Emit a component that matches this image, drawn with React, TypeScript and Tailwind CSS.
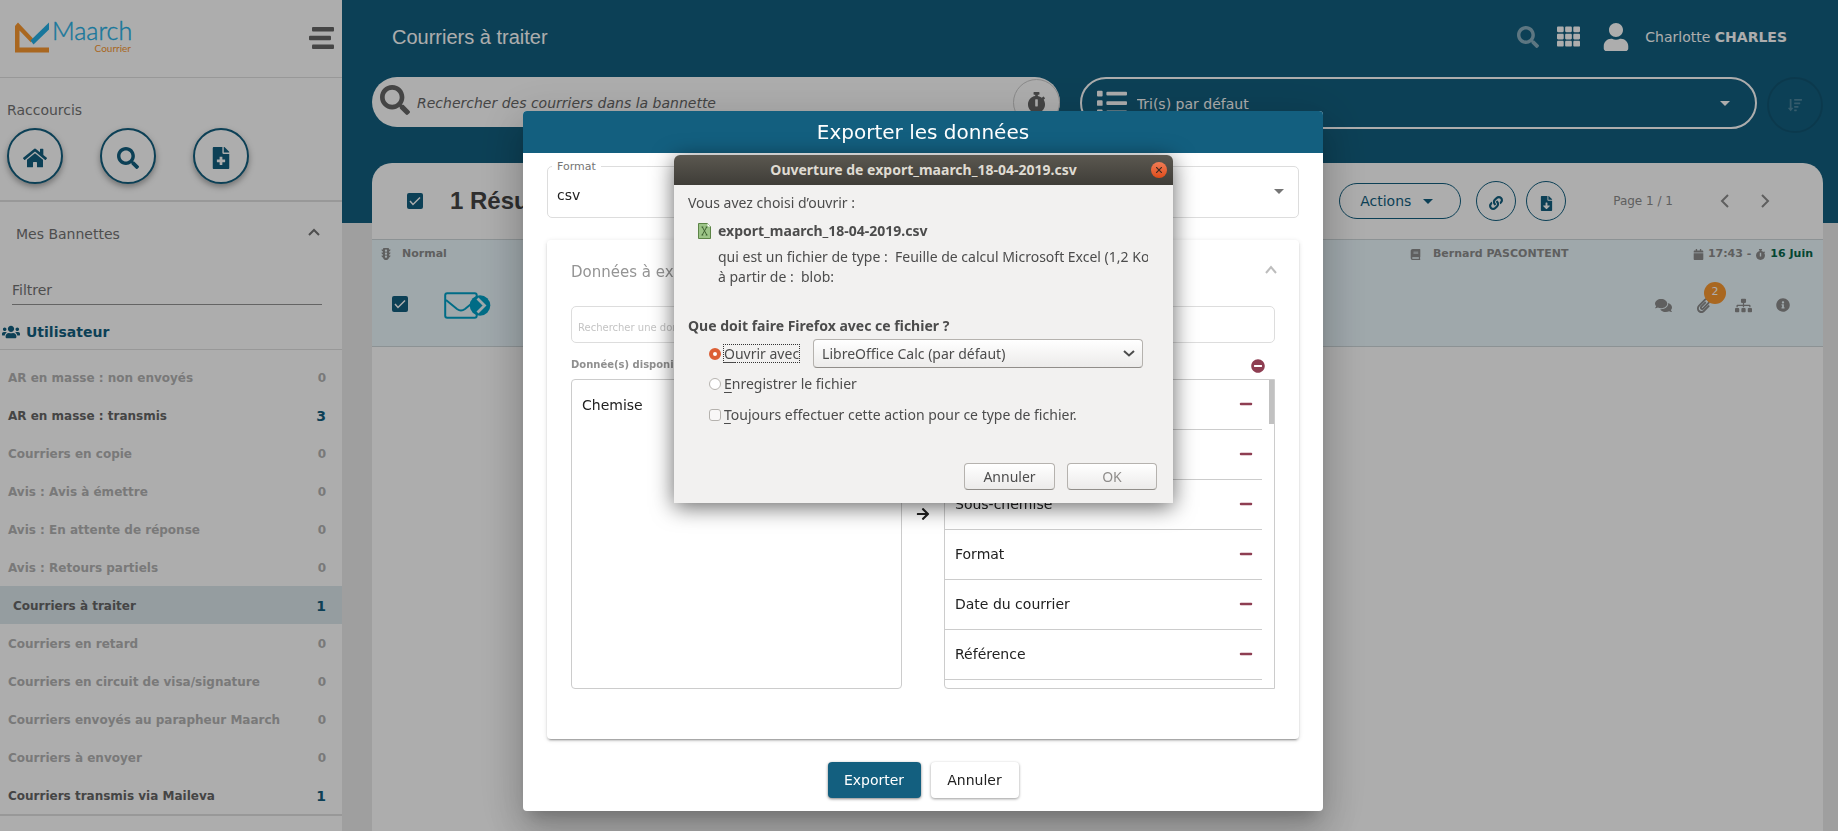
import React from 'react';
import {
  FaArrowRight,
  FaBook,
  FaCalendar,
  FaComments,
  FaFileDownload,
  FaFileMedical,
  FaHome,
  FaInfoCircle,
  FaLink,
  FaList,
  FaMinus,
  FaMinusCircle,
  FaPaperclip,
  FaSearch,
  FaSitemap,
  FaSortAmountDown,
  FaStopwatch,
  FaTh,
  FaTrafficLight,
  FaUser,
  FaUsers,
} from 'react-icons/fa';

const baskets = [
  { label: 'AR en masse : non envoyés', count: 0 },
  { label: 'AR en masse : transmis', count: 3 },
  { label: 'Courriers en copie', count: 0 },
  { label: 'Avis : Avis à émettre', count: 0 },
  { label: 'Avis : En attente de réponse', count: 0 },
  { label: 'Avis : Retours partiels', count: 0 },
  { label: 'Courriers à traiter', count: 1, selected: true },
  { label: 'Courriers en retard', count: 0 },
  { label: 'Courriers en circuit de visa/signature', count: 0 },
  { label: 'Courriers envoyés au parapheur Maarch', count: 0 },
  { label: 'Courriers à envoyer', count: 0 },
  { label: 'Courriers transmis via Maileva', count: 1 },
];

const shortcuts = [
  { label: 'Accueil', icon: <FaHome size={24} /> },
  { label: 'Rechercher', icon: <FaSearch size={22} /> },
  { label: 'Nouveau courrier', icon: <FaFileMedical size={22} /> },
];

const exportFields = ['Numéro', 'Objet', 'Sous-chemise', 'Format', 'Date du courrier', 'Référence'];

function Logo() {
  return (
    <svg width="120" height="40" viewBox="0 0 120 40" role="img" aria-label="Maarch Courrier">
      <path d="M0 8 L3 4.500 L18 20.500 L16 24.500 L4.500 12.500 V29.500 H34 V34.500 H0 Z" fill="#F99830" />
      <path d="M15.500 22.500 L34 4.500 V11.500 L18.500 26.500 Z" fill="#24B0E6" />
      <text x="37" y="22" fontFamily="Lato, sans-serif" fontWeight="300" fontSize="25" fill="#24B0E6" stroke="#24B0E6" strokeWidth="0.400">
        Maarch
      </text>
      <text x="116" y="34" textAnchor="end" fontFamily="Lato, sans-serif" fontSize="10" fill="#F99830">Courrier</text>
    </svg>
  );
}

function Chevron({ d, className }: { d: string; className?: string }) {
  return (
    <svg width="16" height="16" viewBox="0 0 16 16" fill="none" stroke="currentColor" strokeWidth="2" className={className}>
      <path d={d} />
    </svg>
  );
}

function Caret({ className }: { className?: string }) {
  return (
    <svg width="10" height="5" viewBox="0 0 10 5" fill="currentColor" className={className}>
      <path d="M0 0h10L5 5z" />
    </svg>
  );
}

function CheckBox({ label }: { label: string }) {
  return (
    <span className="grid size-4 place-items-center">
      <input
        type="checkbox"
        defaultChecked
        aria-label={label}
        className="col-start-1 row-start-1 size-4 appearance-none rounded-[2px] bg-[#135F7F]"
      />
      <svg
        width="12"
        height="12"
        viewBox="0 0 12 12"
        fill="none"
        stroke="#fff"
        strokeWidth="1.500"
        className="pointer-events-none col-start-1 row-start-1"
      >
        <path d="M1 6l3 3.500L11 2.500" />
      </svg>
    </span>
  );
}

function MailIcon() {
  return (
    <svg width="48" height="28" viewBox="0 0 48 28" fill="none">
      <rect x="1.200" y="1.200" width="31.500" height="24.500" rx="2" stroke="#00A0C6" strokeWidth="2" />
      <path d="M2 8l11 9q4 3 8 0l11-9" stroke="#00A0C6" strokeWidth="2" />
      <circle cx="36" cy="13.500" r="10.300" fill="#00A0C6" />
      <path d="M33.500 6.500l7 7-7 7" stroke="#EBF8FD" strokeWidth="2.800" />
    </svg>
  );
}

function Sidebar() {
  return (
    <aside className="w-[342px] shrink-0 overflow-hidden bg-white text-[#737373]">
      <div className="flex h-[78px] items-center justify-between border-b border-[#E0E0E0] pr-2 pb-[2px] pl-[15px]">
        <Logo />
        <button aria-label="Menu" className="text-[#666]">
          <svg width="25" height="22" viewBox="0 0 25 22" fill="currentColor">
            <rect x="3" width="22" height="4.600" rx="1" />
            <rect y="8.700" width="22" height="4.600" rx="1" />
            <rect x="3" y="17.400" width="22" height="4.600" rx="1" />
          </svg>
        </button>
      </div>
      <div className="border-b-2 border-[#E0E0E0] px-[7px] pt-[22px] pb-4">
        <h2 className="text-sm">Raccourcis</h2>
        <div className="mt-2 flex gap-[37px]">
          {shortcuts.map((s) => (
            <button
              key={s.label}
              aria-label={s.label}
              className="flex size-14 items-center justify-center rounded-full border-2 border-[#135F7F] bg-white pt-1 text-[#135F7F] shadow-[0_3px_6px_rgba(0,0,0,0.35)]"
            >
              {s.icon}
            </button>
          ))}
        </div>
      </div>
      <button className="flex h-16 w-full items-center justify-between pr-5 pl-4 text-sm">
        Mes Bannettes
        <Chevron d="M3 11l5-5 5 5" className="mb-1" />
      </button>
      <div className="mt-2 mr-5 ml-3">
        <input
          aria-label="Filtrer"
          placeholder="Filtrer"
          className="h-[31px] w-full border-b border-[#949494] pt-[2px] text-sm outline-none placeholder:text-[#737373]"
        />
      </div>
      <h3 className="mt-3 flex h-[33px] items-center gap-[6px] border-b border-[#E0E0E0] pb-[2px] pl-[2px] text-sm font-bold text-[#135F7F]">
        <FaUsers size={18} />
        Utilisateur
      </h3>
      <ul className="mt-2 border-b-2 border-[#E0E0E0]">
        {baskets.map((b) => (
          <li key={b.label}>
            <a
              href="#"
              className={`flex h-[38px] items-center justify-between pt-[2px] pr-4 text-xs font-bold ${
                b.selected ? 'bg-[#DCE7EC] pl-[13px]' : 'pl-2'
              } ${b.count > 0 ? 'text-[#666]' : 'text-[#B3B3B3]'}`}
            >
              <span>{b.label}</span>
              <span className={b.count > 0 ? 'text-sm text-[#135F7F]' : ''}>{b.count}</span>
            </a>
          </li>
        ))}
      </ul>
    </aside>
  );
}

function TopBar() {
  return (
    <header className="h-[223px] bg-[#135F7F] pr-[15px] pl-[30px] text-white">
      <div className="flex h-[77px] items-center justify-between pr-9 pb-1 pl-5">
        <h1 className="font-['Liberation_Sans',sans-serif] text-xl">Courriers à traiter</h1>
        <div className="flex items-center text-sm">
          <FaSearch size={22} className="opacity-50" />
          <FaTh size={23} className="ml-[18px]" />
          <FaUser size={28} className="ml-[22px]" />
          <span className="ml-[15px]">
            Charlotte <b>CHARLES</b>
          </span>
        </div>
      </div>
      <div className="flex items-start">
        <div className="mr-5 flex h-[50px] w-[47.4%] items-center rounded-[25px] bg-white pl-2 text-[#666]">
          <FaSearch size={30} className="mb-1" />
          <input
            aria-label="Rechercher des courriers dans la bannette"
            placeholder="Rechercher des courriers dans la bannette"
            className="ml-[7px] min-w-0 flex-1 pt-[2px] text-sm italic outline-none placeholder:text-[#666]"
          />
          <button
            aria-label="Historique"
            className="flex size-[47px] items-center justify-center rounded-full border border-[#CCC]"
          >
            <FaStopwatch size={21} />
          </button>
        </div>
        <div className="flex h-[52px] flex-1 items-center rounded-[26px] border-2 border-white px-[15px]">
          <FaList size={30} />
          <select aria-label="Tri" className="ml-[10px] flex-1 appearance-none pt-[2px] text-sm outline-none">
            <option>Tri(s) par défaut</option>
          </select>
          <Caret className="mr-[10px]" />
        </div>
        <button
          aria-label="Ordre de tri"
          disabled
          className="ml-[10px] flex size-14 items-center justify-center rounded-full border-2 border-black/10 text-white/25"
        >
          <FaSortAmountDown size={14} />
        </button>
      </div>
    </header>
  );
}

function ResultCard() {
  return (
    <section className="-mt-[60px] mr-[15px] ml-[30px] flex-1 rounded-t-[20px] bg-white text-[#8C8C8C]">
      <div className="flex h-[76px] items-center pr-[50px] pl-[35px]">
        <CheckBox label="Tout sélectionner" />
        <h2 className="ml-[27px] flex-1 font-['Liberation_Sans',sans-serif] text-2xl font-bold text-[#444]">
          1 Résultat
        </h2>
        <button className="flex h-9 w-[122px] items-center gap-3 rounded-full border border-[#135F7F] pl-5 text-sm text-[#135F7F]">
          Actions
          <Caret />
        </button>
        <button
          aria-label="Lien"
          className="ml-[15px] flex size-10 items-center justify-center rounded-full border border-[#135F7F] pt-1 text-[#135F7F]"
        >
          <FaLink size={14} />
        </button>
        <button
          aria-label="Exporter"
          className="ml-[10px] flex size-10 items-center justify-center rounded-full border border-[#135F7F] pt-1 text-[#135F7F]"
        >
          <FaFileDownload size={15} />
        </button>
        <span className="ml-[47px] text-xs">Page 1 / 1</span>
        <button aria-label="Page précédente" className="ml-11">
          <Chevron d="M11 2L5 8l6 6" />
        </button>
        <button aria-label="Page suivante" className="ml-6">
          <Chevron d="M5 2l6 6-6 6" />
        </button>
      </div>
      <article className="h-[108px] border-y border-[#CFD8DB] bg-[#EBF8FD] text-[11px] font-bold">
        <div className="flex h-[26px] items-center pt-[2px] pr-[10px] pl-2">
          <FaTrafficLight size={12} />
          <span className="ml-[10px] flex-1">Normal</span>
          <FaBook size={11} />
          <span className="ml-3 w-[260px]">Bernard PASCONTENT</span>
          <span className="flex items-center gap-1">
            <FaCalendar size={11} />
            17:43 -
            <FaStopwatch size={11} />
            <span className="text-[#06674A]">16 Juin</span>
          </span>
        </div>
        <div className="flex h-[76px] items-center pr-[33px] pl-5">
          <CheckBox label="Sélectionner le courrier" />
          <span className="ml-9 flex-1 pt-1">
            <MailIcon />
          </span>
          <div className="flex items-center pt-[2px]">
            <FaComments size={17} />
            <span className="relative ml-6">
              <FaPaperclip size={15} />
              <span className="absolute -top-4 left-[8px] flex size-[22px] items-center justify-center rounded-full bg-[#F99830] font-normal text-white">
                2
              </span>
            </span>
            <FaSitemap size={17} className="ml-6" />
            <FaInfoCircle size={14} className="ml-6" />
          </div>
        </div>
      </article>
    </section>
  );
}

function ExportModal() {
  return (
    <div className="fixed inset-0 flex items-start justify-center bg-black/32 pt-[111px] pl-2">
      <div className="w-[800px] max-w-full rounded bg-white text-[#212121] shadow-[0_11px_15px_-7px_rgba(0,0,0,0.2),0_24px_38px_3px_rgba(0,0,0,0.14),0_9px_46px_8px_rgba(0,0,0,0.12)]">
        <h2 className="flex h-[42px] items-center justify-center rounded-t bg-[#135F7F] text-xl text-white">
          Exporter les données
        </h2>
        <div className="px-6 pt-[13px] pb-[13px]">
          <div className="relative flex h-[52px] items-center rounded-[5px] border border-[#DDD] pr-[14px] pb-[2px] pl-[9px]">
            <label htmlFor="format" className="absolute -top-2 left-1 bg-white px-[5px] text-[11px] leading-4 text-[#757575]">
              Format
            </label>
            <select id="format" className="flex-1 appearance-none pt-2 text-sm outline-none">
              <option>csv</option>
            </select>
            <Caret className="text-[#757575]" />
          </div>
          <section className="mt-[22px] rounded px-6 pb-[50px] shadow-[0_3px_1px_-2px_rgba(0,0,0,0.2),0_2px_2px_rgba(0,0,0,0.14),0_1px_5px_rgba(0,0,0,0.12)]">
            <div className="flex h-[62px] items-center justify-between pt-[2px] text-[15px] text-[#949494]">
              Données à exporter
              <Chevron d="M3 11l5-6 5 6" className="-mr-1 mb-1 text-[#BDBDBD]" />
            </div>
            <input
              aria-label="Rechercher une donnée"
              placeholder="Rechercher une donnée"
              className="mt-1 h-[37px] w-full rounded-[5px] border border-[#DDD] px-[6px] pt-[6px] text-[10px] outline-none placeholder:text-[#C4C4C4]"
            />
            <div className="flex h-9 items-center justify-between pt-[6px] pr-[10px] text-[10px] font-bold text-[#8F8F8F]">
              Donnée(s) disponible(s)
              <button aria-label="Tout retirer" className="pt-1 text-[#8E3E52]">
                <FaMinusCircle size={14} />
              </button>
            </div>
            <div className="flex items-stretch text-sm">
              <ul className="h-[310px] flex-1 rounded border border-[#CCC]">
                <li className="flex h-[50px] items-center px-[10px]">Chemise</li>
              </ul>
              <div className="flex w-[42px] justify-center pt-[128px]">
                <FaArrowRight size={14} />
              </div>
              <div className="flex h-[310px] flex-1 items-start justify-between overflow-hidden rounded-l border border-[#CCC]">
                <ul className="mr-[7px] flex-1">
                  {exportFields.map((field) => (
                    <li key={field} className="flex h-[50px] items-center justify-between border-b border-[#CCC] pr-[9px] pb-px pl-[10px]">
                      {field}
                      <button aria-label={`Retirer ${field}`} className="text-[#8E3E52]">
                        <FaMinus size={14} />
                      </button>
                    </li>
                  ))}
                </ul>
                <div className="h-11 w-[5px] bg-[#C1C1C1]" />
              </div>
            </div>
          </section>
          <div className="mt-[23px] flex justify-center gap-[10px] text-sm">
            <button className="h-9 w-[93px] rounded bg-[#135F7F] text-white shadow-[0_1px_3px_rgba(0,0,0,0.5)]">Exporter</button>
            <button className="h-9 w-[88px] rounded bg-white shadow-[0_1px_3px_rgba(0,0,0,0.4)]">Annuler</button>
          </div>
        </div>
      </div>
    </div>
  );
}

function FileIcon() {
  return (
    <svg width="13" height="16" viewBox="0 0 13 16" className="mt-[2px]">
      <path d="M.5.5h9l3 3v12H.5z" fill="#9CC487" stroke="#5C8446" />
      <path d="M9.500.5v3h3z" fill="#fff" />
      <path d="M3.500 4h1.800M7.700 4h1.800M4.300 4l4.500 8M8.700 4l-4.500 8M3.500 12h1.800M7.700 12h1.800" stroke="#3E6130" strokeWidth="1" />
    </svg>
  );
}

function DownloadDialog() {
  const buttonClass =
    'h-[27px] rounded-[4px] border border-[#B5B2AE] border-b-[#918E8A] bg-linear-to-b from-white to-[#ECEBEA]';

  return (
    <div className="fixed inset-0 flex items-start justify-center pt-[155px] pl-[9px]">
      <div
        role="dialog"
        aria-label="Ouverture de export_maarch_18-04-2019.csv"
        className="w-[499px] rounded-t-[6px] bg-[#F2F1F0] font-['Noto_Sans',sans-serif] text-sm text-[#4C4C4C] shadow-[0_4px_22px_rgba(0,0,0,0.6)]"
      >
        <div className="flex h-[30px] items-center rounded-t-[6px] bg-linear-to-b from-[#5B5850] to-[#3F3D38] pr-[6px] pl-[22px] font-bold text-[#DFDBD2]">
          <span className="flex-1 text-center">Ouverture de export_maarch_18-04-2019.csv</span>
          <button
            aria-label="Fermer"
            className="flex size-4 items-center justify-center rounded-full bg-linear-to-b from-[#F07C54] to-[#DF4B16]"
          >
            <svg width="6" height="6" viewBox="0 0 6 6" stroke="#3C2A22" strokeWidth="1.200">
              <path d="M0 0l6 6M6 0L0 6" />
            </svg>
          </button>
        </div>
        <div className="px-[14px] pt-2 pb-[13px] leading-5">
          <p>Vous avez choisi d’ouvrir :</p>
          <div className="mt-2 mr-[11px] flex pl-[10px]">
            <FileIcon />
            <div className="ml-[7px] min-w-0 flex-1">
              <p className="font-bold">export_maarch_18-04-2019.csv</p>
              <p className="mt-[6px] overflow-hidden whitespace-nowrap">
                qui est un fichier de type :&nbsp; Feuille de calcul Microsoft Excel (1,2 Ko)
              </p>
              <p>à partir de :&nbsp; blob:</p>
            </div>
          </div>
          <p className="mt-[29px] font-bold">Que doit faire Firefox avec ce fichier ?</p>
          <div className="pr-4 pl-[21px]">
            <div className="mt-[3px] flex items-center">
              <input
                id="open-with"
                type="radio"
                name="action"
                defaultChecked
                className="size-3 appearance-none rounded-full border-4 border-[#DC5F35] bg-white"
              />
              <label htmlFor="open-with" className="ml-[2px] border border-dotted border-[#333] leading-[17px]">
                <span className="underline underline-offset-3">O</span>uvrir avec
              </label>
              <span className="relative ml-[13px] flex flex-1 items-center">
                <select
                  aria-label="Application"
                  className="h-[29px] w-full appearance-none rounded-[4px] border border-[#B5B2AE] border-b-[#918E8A] bg-linear-to-b from-white to-[#ECEBEA] pl-2"
                >
                  <option>LibreOffice Calc (par défaut)</option>
                </select>
                <Chevron d="M3 5l5 4.500L13 5" className="pointer-events-none absolute right-[6px]" />
              </span>
            </div>
            <div className="mt-[6px] flex items-center">
              <input
                id="save-file"
                type="radio"
                name="action"
                className="size-3 appearance-none rounded-full border border-[#B5B2AE] bg-white"
              />
              <label htmlFor="save-file" className="ml-[3px]">
                <span className="underline underline-offset-3">E</span>nregistrer le fichier
              </label>
            </div>
            <div className="mt-[11px] flex items-center">
              <input
                id="always"
                type="checkbox"
                className="size-3 appearance-none rounded-[3px] border border-[#B5B2AE] bg-[#F8F7F7]"
              />
              <label htmlFor="always" className="ml-[3px]">
                <span className="underline underline-offset-3">T</span>oujours effectuer cette action pour ce type de fichier.
              </label>
            </div>
          </div>
          <div className="mt-[38px] flex justify-end gap-3 pr-[2px]">
            <button className={`${buttonClass} w-[91px]`}>Annuler</button>
            <button disabled className={`${buttonClass} w-[90px] text-[#8F8D8B]`}>
              OK
            </button>
          </div>
        </div>
      </div>
    </div>
  );
}

export default function App() {
  return (
    <div className="flex h-screen overflow-hidden bg-[#EAEAEA] font-['DejaVu_Sans',sans-serif]">
      <Sidebar />
      <main className="flex min-w-0 flex-1 flex-col">
        <TopBar />
        <ResultCard />
      </main>
      <ExportModal />
      <DownloadDialog />
    </div>
  );
}
